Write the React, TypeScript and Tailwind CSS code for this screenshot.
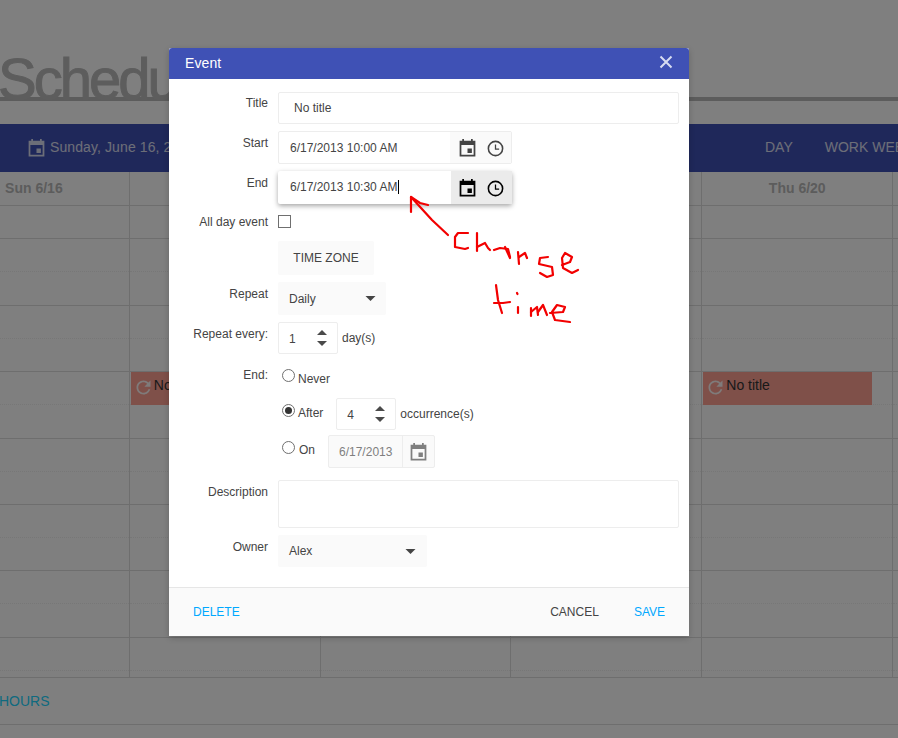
import React from "react";

const font = { fontFamily: '"Liberation Sans", Arial, sans-serif' };

function CalendarIcon({ className }: { className?: string }) {
  return (
    <svg viewBox="0 0 24 24" className={className} fill="currentColor">
      <path d="M17 12h-5v5h5v-5zM16 1v2H8V1H6v2H3v18h18V3h-3V1h-2zm3 18H5V8h14v11z" />
    </svg>
  );
}

function ClockIcon({ className }: { className?: string }) {
  return (
    <svg viewBox="0 0 24 24" className={className} fill="none" stroke="currentColor" strokeWidth="2">
      <circle cx="12" cy="12" r="9" />
      <path d="M12 7v5.8h4.6" strokeWidth="1.6" />
    </svg>
  );
}

function RepeatIcon() {
  return (
    <svg viewBox="0 0 24 24" className="w-[21px] h-[21px] shrink-0 text-white/90" fill="currentColor">
      <path d="M17.65 6.35C16.2 4.9 14.21 4 12 4c-4.42 0-7.99 3.58-7.99 8s3.57 8 7.99 8c3.73 0 6.84-2.55 7.73-6h-2.08c-.82 2.33-3.04 4-5.65 4-3.31 0-6-2.69-6-6s2.69-6 6-6c1.66 0 3.14.69 4.22 1.78L13 11h7V4l-2.35 2.35z" />
    </svg>
  );
}

function Caret({ up = false }: { up?: boolean }) {
  return (
    <svg viewBox="0 0 10 5" className="w-[10px] h-[5px] text-[#4a4a4a]" fill="currentColor">
      <path d={up ? "M0 5 5 0l5 5z" : "M0 0h10L5 5z"} />
    </svg>
  );
}

function Numeric({ value }: { value: string }) {
  return (
    <div className="w-[60px] h-[32px] border border-[#ededed] rounded-[2px] bg-white flex items-center">
      <span className="ml-[10px] w-[28px] text-[#444] pt-[1px]">{value}</span>
      <div className="flex flex-col gap-[6px] mt-[-1px]">
        <Caret up />
        <Caret />
      </div>
    </div>
  );
}

function Radio({ checked = false }: { checked?: boolean }) {
  return (
    <span className="w-[13px] h-[13px] rounded-full border border-[#6f6f6f] flex items-center justify-center shrink-0">
      {checked && <span className="w-[7px] h-[7px] rounded-full bg-[#333]" />}
    </span>
  );
}

function Label({ text, className }: { text: string; className: string }) {
  return <div className={`w-[99px] mr-[10px] text-right text-[#444] leading-[16px] shrink-0 ${className}`}>{text}</div>;
}

function Select({ text, className }: { text: string; className: string }) {
  return (
    <div className={`bg-[#fafafa] rounded-[2px] flex items-center justify-between pl-[11px] text-[#444] ${className}`}>
      <span>{text}</span>
      <svg viewBox="0 0 10 5" className="w-[11px] h-[5px] text-[#444]" fill="currentColor">
        <path d="M0 0h10L5 5z" />
      </svg>
    </div>
  );
}

function DateTime({ value, focused = false }: { value: string; focused?: boolean }) {
  return (
    <div
      className={`w-[234px] h-[33px] flex rounded-[2px] ${
        focused ? "shadow-[0_2px_5px_rgba(0,0,0,0.35)] bg-white" : "border border-[#ededed] bg-white"
      }`}
    >
      <div className={`flex-1 flex items-center text-[#444] ${focused ? "pl-[12px] pb-[2px]" : "pl-[11px]"}`}>
        {value}
        {focused && <span className="w-px h-[14px] bg-black ml-[1px]" />}
      </div>
      <div
        className={`w-[61px] flex items-center gap-[8px] pt-[2px] ${
          focused ? "pl-[6px] bg-[#ebebeb] text-black" : "pl-[7px] bg-[#fafafa] text-[#444]"
        }`}
      >
        <CalendarIcon className="w-[21px] h-[21px]" />
        <ClockIcon className="w-[19px] h-[19px]" />
      </div>
    </div>
  );
}

function EventPill() {
  return (
    <div className="absolute left-[1px] top-[0px] w-[169px] h-[33px] bg-[#ffa093] flex items-start pl-[2px] pt-[5px] text-[14px] text-[#333]">
      <RepeatIcon />
      <span className="leading-[16px]">No title</span>
    </div>
  );
}

const colNames = ["Sun 6/16", "Mon 6/17", "Tue 6/18", "Wed 6/19", "Thu 6/20", "Fri 6/21"];
const rowHeights = ["h-[67px]", "h-[66px]", "h-[67px]", "h-[66px]", "h-[66px]", "h-[67px]"];

function Cells({ row }: { row: number }) {
  return (
    <>
      {colNames.map((c, i) => (
        <div key={c} className="border-r border-[#dcdcdc] h-full relative">
          <div className="h-[33px] border-b border-dotted border-[#eeeeee]" />
          {row === 2 && (i === 1 || i === 4) && <EventPill />}
        </div>
      ))}
    </>
  );
}

function Background() {
  return (
    <div className="w-[898px] h-[738px] bg-white overflow-hidden text-[14px]">
      <div className="h-[124px] pt-[37px]">
        <h1 className="h-[64px] border-b-[4px] border-[#b8b8b8] text-[58px] leading-[84px] tracking-[-3px] text-[#bbbbbb] [-webkit-text-stroke:1px_#bbbbbb] -ml-[2px] mr-[-2px] whitespace-nowrap">
          Scheduler
        </h1>
      </div>
      <div className="h-[48px] bg-[#3f51b5] flex items-center text-white whitespace-nowrap overflow-hidden">
        <div className="w-[765px] shrink-0 flex items-center pl-[26px] gap-[3px] opacity-80">
          <CalendarIcon className="w-[21px] h-[21px]" />
          <span className="tracking-[0.1px] pb-[2px]">Sunday, June 16, 2013</span>
        </div>
        <span className="opacity-80 pb-[1px]">DAY</span>
        <span className="ml-[32px] opacity-80 pb-[1px]">WORK WEEK</span>
      </div>
      <div className="w-[1145px] -ml-[61px]">
        <div className="grid grid-cols-6 h-[34px] border-b border-[#dcdcdc]">
          {colNames.map((c) => (
            <div key={c} className="border-r border-[#dcdcdc] flex items-center justify-center font-bold text-[#b8b8b8]">
              {c}
            </div>
          ))}
        </div>
        <div className="grid grid-cols-6 h-[33px] border-b border-[#dcdcdc]">
          {colNames.map((c) => (
            <div key={c} className="border-r border-[#dcdcdc]" />
          ))}
        </div>
        {rowHeights.map((h, r) => (
          <div key={r} className={`grid grid-cols-6 border-b border-[#dcdcdc] ${h}`}>
            <Cells row={r} />
          </div>
        ))}
        <div className="grid grid-cols-6 h-[40px] border-b border-[#dcdcdc]">
          <Cells row={9} />
        </div>
      </div>
      <div className="h-[47px] border-b border-[#dcdcdc] flex items-center -ml-[1px] text-[#20d4ff]">HOURS</div>
    </div>
  );
}

function Annotation() {
  const lines = [
    "M448 235 L432 220 L411 197",
    "M411 197 L411 212",
    "M411 197 L420 203 L428 205",
    "M468 233 L458 233 L455 237 L455 247 L465 249 L468 248",
    "M477 233 L477 251",
    "M477 247 L485 243 L488 248 L490 250",
    "M494 250 L500 248 L508 249 L510 257",
    "M505 247 L510 258",
    "M518 252 L519 264",
    "M519 257 L525 253 L527 258",
    "M548 257 L540 258 L539 264 L552 267 L553 275 L547 277 L540 273",
    "M562 265 L570 262 L572 257 L565 253 L562 258 L563 268 L572 273 L578 270",
    "M496 285 L498 300 L502 313",
    "M494 303 L503 303 L510 302",
    "M517 293 L517.500 294",
    "M518 307 L518 313",
    "M531 308 L531 316",
    "M531 312 L537 307 L538 315",
    "M538 312 L543 305 L547 315",
    "M550 313 L563 312 L565 307 L557 305 L552 312 L555 320 L570 322",
  ];
  return (
    <svg className="absolute inset-0 w-[898px] h-[738px] pointer-events-none" viewBox="0 0 898 738" fill="none" stroke="#f20000" strokeWidth="2.2" strokeLinecap="round" strokeLinejoin="round">
      {lines.map((d) => (
        <path key={d} d={d} />
      ))}
    </svg>
  );
}

function Modal() {
  return (
    <div className="absolute left-[169px] top-[48px] w-[520px] h-[588px] bg-white rounded-[2px] flex flex-col text-[12px] shadow-[0_2px_6px_rgba(0,0,0,0.2)]">
      <div className="h-[31px] shrink-0 bg-[#3f51b5] rounded-t-[3px] flex items-center justify-between pl-[16px] pr-[16px] text-white text-[14px]">
        <span className="tracking-[0.1px]">Event</span>
        <svg viewBox="0 0 14 14" className="w-[14px] h-[14px] mb-[3px] text-[#d7dcf2]" fill="none" stroke="currentColor" strokeWidth="2">
          <path d="M1.500 1.500l11 11M12.500 1.500l-11 11" />
        </svg>
      </div>
      <div className="flex-1 pt-[13px]">
        <div className="flex">
          <Label text="Title" className="pt-[3px]" />
          <div className="w-[401px] h-[32px] border border-[#ededed] rounded-[2px] flex items-center pl-[15px] text-[#444]">No title</div>
        </div>
        <div className="flex mt-[7px]">
          <Label text="Start" className="pt-[4px]" />
          <DateTime value="6/17/2013 10:00 AM" />
        </div>
        <div className="flex mt-[7px]">
          <Label text="End" className="pt-[4px]" />
          <DateTime value="6/17/2013 10:30 AM" focused />
        </div>
        <div className="flex mt-[9px] items-center h-[17px]">
          <Label text="All day event" className="" />
          <span className="w-[13px] h-[13px] border border-[#6f6f6f] bg-white" />
        </div>
        <div className="flex mt-[11px]">
          <div className="w-[109px]" />
          <div className="w-[96px] h-[34px] bg-[#fafafa] rounded-[2px] flex items-center justify-center text-[#444]">TIME ZONE</div>
        </div>
        <div className="flex mt-[7px]">
          <Label text="Repeat" className="pt-[4px]" />
          <Select text="Daily" className="w-[108px] h-[33px] pr-[10px]" />
        </div>
        <div className="flex mt-[7px]">
          <Label text="Repeat every:" className="pt-[4px]" />
          <Numeric value="1" />
          <span className="ml-[4px] text-[#444] pt-[7px]">day(s)</span>
        </div>
        <div className="flex mt-[10px]">
          <Label text="End:" className="pt-[3px]" />
          <div className="flex items-center h-[22px] pl-[4px]">
            <Radio />
            <span className="ml-[3px] text-[#444] pt-[7px]">Never</span>
          </div>
        </div>
        <div className="flex mt-[12px] h-[32px]">
          <div className="w-[113px]" />
          <div className="flex items-center h-[25px]">
            <Radio checked />
            <span className="ml-[3px] text-[#444] pt-[5px]">After</span>
          </div>
          <div className="ml-[13px] flex">
            <Numeric value="4" />
            <span className="ml-[4px] text-[#444] pt-[7px]">occurrence(s)</span>
          </div>
        </div>
        <div className="flex mt-[5px] h-[33px]">
          <div className="w-[113px]" />
          <div className="flex items-center h-[25px]">
            <Radio />
            <span className="ml-[4px] text-[#444] pt-[5px]">On</span>
          </div>
          <div className="ml-[13px] w-[107px] h-[33px] border border-[#ededed] rounded-[2px] bg-[#fafafa] flex">
            <div className="flex-1 flex items-center pl-[10px] text-[#7f7f7f]">6/17/2013</div>
            <div className="w-[32px] border-l border-[#ededed] flex items-center justify-center pt-[2px] text-[#7f7f7f]">
              <CalendarIcon className="w-[21px] h-[21px]" />
            </div>
          </div>
        </div>
        <div className="flex mt-[12px]">
          <Label text="Description" className="pt-[4px]" />
          <div className="w-[401px] h-[48px] border border-[#ededed] rounded-[2px]" />
        </div>
        <div className="flex mt-[7px]">
          <Label text="Owner" className="pt-[4px]" />
          <Select text="Alex" className="w-[149px] h-[32px] pr-[11px]" />
        </div>
      </div>
      <div className="h-[49px] shrink-0 border-t border-[#e6e6e6] bg-[#fafafa] flex items-center px-[24px]">
        <span className="text-[#00a8ff]">DELETE</span>
        <span className="ml-auto text-[#444]">CANCEL</span>
        <span className="ml-[35px] text-[#00a8ff]">SAVE</span>
      </div>
    </div>
  );
}

export default function App() {
  return (
    <div className="relative w-[898px] h-[738px] overflow-hidden" style={font}>
      <Background />
      <div className="absolute inset-0 bg-black/50" />
      <Modal />
      <Annotation />
    </div>
  );
}
